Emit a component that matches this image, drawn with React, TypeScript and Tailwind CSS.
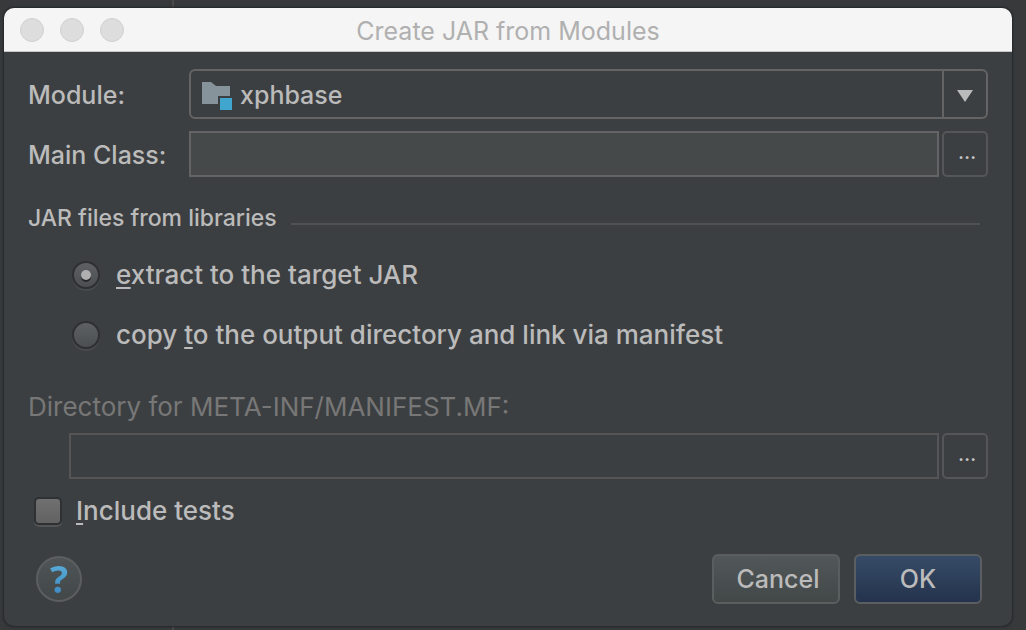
import { useState, type ReactNode } from "react";

function BrowseButton({ label }: { label: string }) {
  return (
    <button
      type="button"
      aria-label={label}
      className="flex h-[46px] w-[46px] shrink-0 items-center justify-center rounded-[5px] border-2 border-[#555657] pb-1 pl-1 text-xl leading-none text-[#c8c8c8]"
    >
      …
    </button>
  );
}

function Radio({
  id,
  checked,
  onSelect,
  children,
}: {
  id: string;
  checked: boolean;
  onSelect: () => void;
  children: ReactNode;
}) {
  return (
    <div className="flex items-center gap-4">
      <span className="grid size-7 shrink-0 place-items-center">
        <input
          id={id}
          type="radio"
          name="libraries"
          checked={checked}
          onChange={onSelect}
          className="peer col-start-1 row-start-1 size-7 appearance-none rounded-full border-2 border-[#2e3032] bg-linear-to-b from-[#5d6163] to-[#4b4f51] shadow-[0_2px_0_#484b4d]"
        />
        <span className="pointer-events-none col-start-1 row-start-1 hidden size-[10px] rounded-full bg-[#b0b0b0] shadow-[0_2px_0_#252729] peer-checked:block" />
      </span>
      <label htmlFor={id}>{children}</label>
    </div>
  );
}

function Mnemonic({ children }: { children: ReactNode }) {
  return (
    <span className="underline decoration-2 underline-offset-[3px] [text-decoration-skip-ink:none]">{children}</span>
  );
}

export default function App() {
  const [mode, setMode] = useState("extract");
  const [tests, setTests] = useState(false);

  return (
    <div className="relative flex min-h-screen bg-[#37393b] pt-2 pr-[14px] pb-1 pl-1 font-['Inter',sans-serif] text-[26px] leading-8 font-medium text-[#bbbbbb]">
      <div className="absolute inset-y-0 left-[172px] w-[2px] bg-[#48494b]" />
      <section className="relative flex flex-1 flex-col overflow-hidden rounded-[10px] bg-[#3c3f41] shadow-[0_0_2px_1px_#242628]">
        <header className="grid h-11 grid-cols-[1fr_auto_1fr] items-center border-b border-[#c8c8c8] bg-[#f5f5f5] px-4">
          <div className="flex gap-4">
            <button type="button" aria-label="Close" className="size-6 rounded-full border border-[#d0d0d0] bg-[#dddddd]" />
            <button type="button" aria-label="Minimize" className="size-6 rounded-full border border-[#d0d0d0] bg-[#dddddd]" />
            <button type="button" aria-label="Zoom" className="size-6 rounded-full border border-[#d0d0d0] bg-[#dddddd]" />
          </div>
          <h1 className="pt-[2px] text-[25px] font-normal text-[#b0b0b0]">Create JAR from Modules</h1>
        </header>

        <form className="flex flex-1 flex-col px-6 pt-[17px] pb-[22px]" onSubmit={(e) => e.preventDefault()}>
          <div className="grid grid-cols-[161px_1fr] items-center gap-y-3">
            <label htmlFor="module" className="pt-[2px] text-[25px]">
              Module:
            </label>
            <div className="relative">
              <select
                id="module"
                className="block h-[50px] w-full appearance-none rounded-md border-2 border-[#646464] bg-transparent pt-[2px] pr-12 pl-[49px] text-[25px] text-[#bbbbbb]"
              >
                <option>xphbase</option>
              </select>
              <svg
                className="pointer-events-none absolute top-[13px] left-[13px]"
                width="30"
                height="28"
                viewBox="0 0 30 28"
                aria-hidden="true"
              >
                <path d="M0 0H9L14 4H28V14H16V22H0Z" fill="#87939a" />
                <path d="M18 16H30V28H18Z" fill="#40a6ce" />
              </svg>
              <span className="pointer-events-none absolute inset-y-0 right-0 flex w-[46px] items-center justify-center border-l-2 border-[#646464] pt-[3px] pr-[3px]">
                <svg width="16" height="12" viewBox="0 0 16 12" aria-hidden="true">
                  <path d="M0 0H16L8 12Z" fill="#bbbbbb" />
                </svg>
              </span>
            </div>
            <label htmlFor="main-class" className="pt-[2px] text-[25px]">
              Main Class:
            </label>
            <div className="flex gap-[3px]">
              <input
                id="main-class"
                type="text"
                className="h-[46px] min-w-0 flex-1 border-2 border-[#646464] bg-[#45494a] px-2"
              />
              <BrowseButton label="Browse main class" />
            </div>
          </div>

          <fieldset className="mt-[25px] min-w-0">
            <legend className="flex w-full items-center gap-[14px] pr-2 text-[23px] leading-8">
              JAR files from libraries
              <span className="mt-3 h-[2px] flex-1 bg-[#515151]" />
            </legend>
            <div className="flex flex-col gap-7 pt-[25px] pl-11">
              <Radio id="extract" checked={mode === "extract"} onSelect={() => setMode("extract")}>
                <Mnemonic>e</Mnemonic>xtract to the target JAR
              </Radio>
              <Radio id="copy" checked={mode === "copy"} onSelect={() => setMode("copy")}>
                copy <Mnemonic>t</Mnemonic>o the output directory and link via manifest
              </Radio>
            </div>
          </fieldset>

          <label htmlFor="manifest-dir" className="mt-10 font-normal text-[#777777]">
            Directory for META-INF/MANIFEST.MF:
          </label>
          <div className="mt-[10px] flex gap-[3px] pl-[41px]">
            <input
              id="manifest-dir"
              type="text"
              disabled
              className="h-[46px] min-w-0 flex-1 border-2 border-[#555555] bg-[#3c3f41] px-2"
            />
            <BrowseButton label="Browse manifest directory" />
          </div>

          <div className="mt-4 flex items-center gap-[14px] pl-[6px]">
            <input
              id="tests"
              type="checkbox"
              checked={tests}
              onChange={(e) => setTests(e.target.checked)}
              className="size-7 appearance-none rounded-[5px] border-2 border-[#2f3133] bg-linear-to-b from-[#707070] to-[#626262] shadow-[0_2px_0_#525456] checked:from-[#8a8a8a]"
            />
            <label htmlFor="tests">
              <Mnemonic>I</Mnemonic>nclude tests
            </label>
          </div>

          <footer className="mt-auto flex items-center gap-[14px] pr-[6px] pl-2">
            <button
              type="button"
              aria-label="Help"
              className="mr-auto flex size-[46px] items-center justify-center rounded-full border-2 border-[#5c5e5f] bg-linear-to-b from-[#4f5556] to-[#424748] pb-[3px]"
            >
              <span className="bg-linear-to-b from-[#5fb2dc] to-[#3b86c0] bg-clip-text font-['Open_Sans',sans-serif] text-[38px] leading-10 font-bold text-transparent">
                ?
              </span>
            </button>
            <button
              type="button"
              className="h-[50px] w-32 rounded-md border-2 border-[#5b5e5f] bg-linear-to-b from-[#525759] to-[#424748] pl-1 text-[25px]"
            >
              Cancel
            </button>
            <button
              type="submit"
              className="h-[50px] w-32 rounded-md border-2 border-[#5b5e61] bg-linear-to-b from-[#364b68] to-[#25334c] text-[25px]"
            >
              OK
            </button>
          </footer>
        </form>
      </section>
    </div>
  );
}
